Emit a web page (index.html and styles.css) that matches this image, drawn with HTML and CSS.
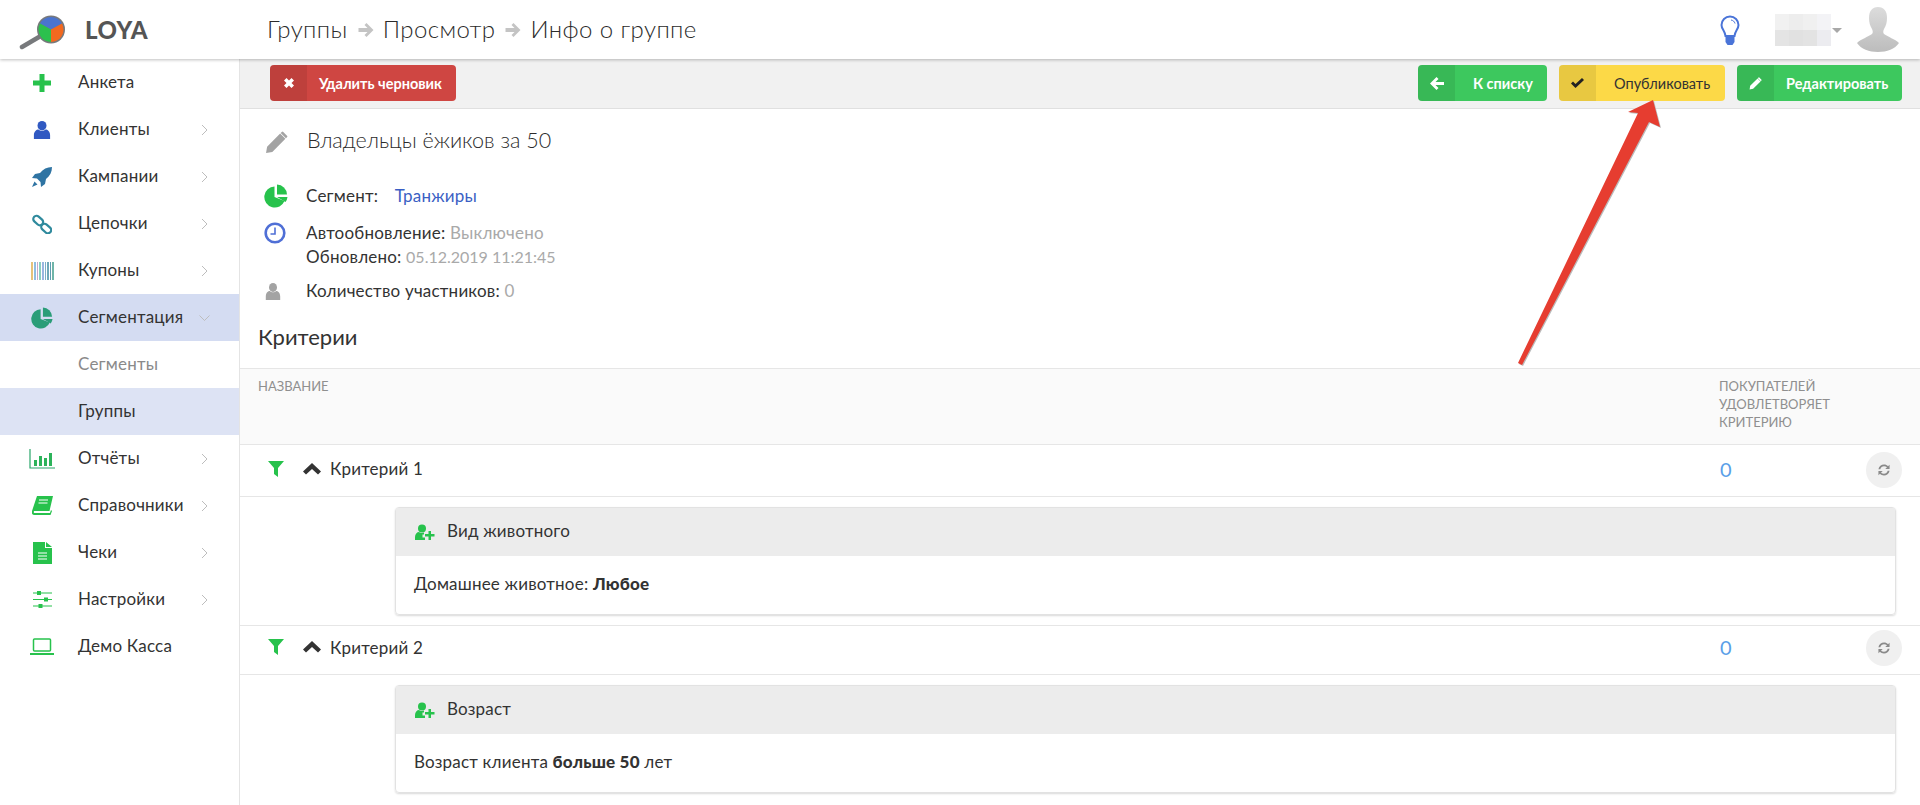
FILE: index.html
```html
<!DOCTYPE html>
<html lang="ru">
<head>
<meta charset="utf-8">
<title>Инфо о группе</title>
<link rel="stylesheet" href="styles.css">
</head>
<body>
<svg class="defs" width="0" height="0">
  <defs>
    <symbol id="i-user" viewBox="0 0 20 20" preserveAspectRatio="none"><circle cx="10" cy="6" r="5"/><path d="M1 20v-4c0-4 3-6 5-6 1 1 2.500 1.500 4 1.500s3-.5 4-1.500c2 0 5 2 5 6v4z"/></symbol>
    <symbol id="i-pie" viewBox="0 0 24 24"><path d="M10.500 2.500A10.500 10.500 0 1 0 20.500 17L10.500 13z"/><path d="M13 .5A10.500 10.500 0 0 1 23 10.500H13z"/><path d="M13 13h10.500a10.500 10.500 0 0 1-2 5z"/></symbol>
    <symbol id="i-pencil" viewBox="0 0 22 22"><path d="M1 21l1-6L14.500 2.500l5 5L7 20z M16 1l1-.5 4.500 4.500-.5 1-1 1-5-5z"/></symbol>
    <symbol id="i-filter" viewBox="0 0 16 16"><path d="M0 0h16L10 7v9L6 13V7z"/></symbol>
    <symbol id="i-up" viewBox="0 0 18 12"><path d="M9 0l9 8.500-3 3L9 6l-6 5.500-3-3z"/></symbol>
    <symbol id="i-refresh" viewBox="0 0 16 14"><path d="M1.500 6C2 2.500 5 .5 8 .5c2 0 3.500.8 4.700 2L14.500.8v5h-5l2-2C10.500 3 9.300 2.500 8 2.500 6 2.500 4.200 4 3.700 6z"/><path d="M14.500 8c-.5 3.500-3.500 5.500-6.500 5.500-2 0-3.500-.8-4.700-2L1.500 13.200v-5h5l-2 2c1 .8 2.200 1.300 3.500 1.300 2 0 3.800-1.500 4.300-3.500z"/></symbol>
    <symbol id="i-userplus" viewBox="0 0 20 16"><circle cx="7" cy="4.500" r="4"/><path d="M0 16v-3c0-3 2-5 4-5 1 .8 2 1 3 1s1.500-.2 2-.5v2H7.500v3H10V16z"/><path d="M13.500 7h2.500v3h3.500v2.500H16V16h-2.500v-3.500H10V10h3.500z"/></symbol>
    <symbol id="i-chev" viewBox="0 0 7 12"><path d="M1 1l5 5-5 5" fill="none" stroke="currentColor" stroke-width="1"/></symbol>
  </defs>
</svg>

<header class="topbar">
  <div class="brand">
    <svg class="logo" viewBox="0 0 48 36" width="48" height="36">
      <path d="M3 32l17-10" stroke="#77797c" stroke-width="4.500" stroke-linecap="round"/>
      <circle cx="32" cy="14.500" r="14" fill="#77797c"/>
      <path d="M32 14.500L21 8.500A12.500 12.500 0 0 1 43 8.500z" fill="#4a74cf"/>
      <path d="M32 14.500V27A12.500 12.500 0 0 1 21 8.500z" fill="#2cc04e"/>
      <path d="M32 14.500l11-6A12.500 12.500 0 0 1 32 27z" fill="#f2691f"/>
    </svg>
    <span class="brand-name">LOYA</span>
  </div>
  <nav class="crumbs">
    <span>Группы</span>
    <svg class="crumb-arrow" viewBox="0 0 16 14" width="16" height="14"><path d="M8.500 0L15.500 7l-7 7-2-2L9.500 9H.5V5h9L6.500 2z"/></svg>
    <span>Просмотр</span>
    <svg class="crumb-arrow" viewBox="0 0 16 14" width="16" height="14"><path d="M8.500 0L15.500 7l-7 7-2-2L9.500 9H.5V5h9L6.500 2z"/></svg>
    <span>Инфо о группе</span>
  </nav>
  <div class="top-right">
    <svg class="bulb" viewBox="0 0 20 30" width="20" height="30">
      <path d="M10 1.500a8.500 8.500 0 0 0-8.500 8.500c0 4 3.500 6 4 11h9c.5-5 4-7 4-11A8.500 8.500 0 0 0 10 1.500z" fill="#fff" stroke="#4a74d8" stroke-width="2"/>
      <path d="M5.500 21h9v6l-2 3h-5l-2-3z" fill="#4a74d8"/>
      <path d="M11 5c2 .3 3.500 1.500 4 3.500" fill="none" stroke="#4a74d8" stroke-width="1"/>
    </svg>
    <div class="blurred">
      <i class="b1"></i><i class="b2"></i><i class="b3"></i><i class="b4"></i>
      <i class="b5"></i><i class="b6"></i><i class="b7"></i><i class="b8"></i>
    </div>
    <span class="caret"></span>
    <svg class="avatar" viewBox="0 0 42 45" width="42" height="45">
      <defs><linearGradient id="ag" x1="0" y1="0" x2="0" y2="1"><stop offset="0" stop-color="#dcdcdc"/><stop offset="1" stop-color="#bcbcbc"/></linearGradient></defs>
      <path d="M21 0c6 0 9 4 9 11 0 4-1 8-3 11-1 2-1 4 0 5 4 3 11 5 15 9-4 6-12 9-21 9S4 42 0 36c4-4 11-6 15-9 1-1 1-3 0-5-2-3-3-7-3-11 0-7 3-11 9-11z" fill="url(#ag)"/>
    </svg>
  </div>
</header>

<div class="layout">
  <aside class="sidebar">
    <a class="nav-item"><span class="nav-ic"><svg viewBox="0 0 18 18" width="18" height="18"><path fill="#27c24c" d="M6.500 0h5v6.500H18v5h-6.500V18h-5v-6.500H0v-5h6.500z"/></svg></span><span class="nav-label">Анкета</span></a>
    <a class="nav-item"><span class="nav-ic"><svg width="18" height="19" fill="#3059c2"><use href="#i-user"/></svg></span><span class="nav-label">Клиенты</span><svg class="chev" width="7" height="12"><use href="#i-chev"/></svg></a>
    <a class="nav-item"><span class="nav-ic"><svg viewBox="0 0 20 20" width="20" height="20"><path fill="#2f74a3" d="M20 0c-5 0-9 2-12 6L3 7 0 11l5 .5 3.500 3.500.5 5 4-3 1-5c4-3 6-7 6-12zM2.500 14.500L0 20l5.500-2.500z"/></svg></span><span class="nav-label">Кампании</span><svg class="chev" width="7" height="12"><use href="#i-chev"/></svg></a>
    <a class="nav-item"><span class="nav-ic"><svg viewBox="0 0 20 20" width="20" height="20" fill="none" stroke="#2f8a9d" stroke-width="2.200"><rect x="-5" y="-3" width="11" height="6.500" rx="3.200" transform="translate(6 6) rotate(42)"/><rect x="-5" y="-3" width="11" height="6.500" rx="3.200" transform="translate(14 14) rotate(42)"/></svg></span><span class="nav-label">Цепочки</span><svg class="chev" width="7" height="12"><use href="#i-chev"/></svg></a>
    <a class="nav-item"><span class="nav-ic"><svg viewBox="0 0 23 18" width="23" height="18"><rect width="23" height="18" fill="#fff"/><rect x="0" width="2" height="18" fill="#e6c27a"/><rect x="3" width="2" height="18" fill="#8fbde0"/><rect x="6" width="1" height="18" fill="#c9a8c8"/><rect x="8" width="2" height="18" fill="#8ccfc0"/><rect x="11" width="2" height="18" fill="#9ab6e0"/><rect x="14" width="1" height="18" fill="#7fb0c8"/><rect x="16" width="2" height="18" fill="#6fa7b8"/><rect x="19" width="1" height="18" fill="#5f9db0"/><rect x="21" width="2" height="18" fill="#6fb5a8"/></svg></span><span class="nav-label">Купоны</span><svg class="chev" width="7" height="12"><use href="#i-chev"/></svg></a>
    <a class="nav-item is-open"><span class="nav-ic"><svg width="22" height="22" fill="#2a9d78"><use href="#i-pie"/></svg></span><span class="nav-label">Сегментация</span><svg class="chev chev-down" width="7" height="12"><use href="#i-chev"/></svg></a>
    <a class="nav-item nav-sub"><span class="nav-ic"></span><span class="nav-label">Сегменты</span></a>
    <a class="nav-item nav-sub is-active"><span class="nav-ic"></span><span class="nav-label">Группы</span></a>
    <a class="nav-item"><span class="nav-ic"><svg viewBox="0 0 26 20" width="26" height="20"><path fill="none" stroke="#2aa66a" stroke-width="1.200" d="M1 0v19h25"/><path fill="#2cb35a" d="M5 11h3v6H5zM10 7h3v10h-3zM15 9h3v8h-3zM20 4h3v13h-3z"/></svg></span><span class="nav-label">Отчёты</span><svg class="chev" width="7" height="12"><use href="#i-chev"/></svg></a>
    <a class="nav-item"><span class="nav-ic"><svg viewBox="0 0 21 19" width="21" height="19"><path fill="#27c24c" d="M5 0h16l-3.500 15H2.500c-1 0-1 2 0 2H18l1-3 1 1-1.500 4H2C0 19-.5 17 0 15z"/><path stroke="#fff" stroke-width="1" d="M7 4h9M6.500 7h9"/></svg></span><span class="nav-label">Справочники</span><svg class="chev" width="7" height="12"><use href="#i-chev"/></svg></a>
    <a class="nav-item"><span class="nav-ic"><svg viewBox="0 0 19 22" width="19" height="22"><path fill="#27c24c" d="M0 0h12v6h7v16H0z"/><path fill="#27c24c" d="M13 0l6 5h-6z"/><path stroke="#fff" stroke-width="1.200" d="M5 11h9M5 14h9M5 17h9"/></svg></span><span class="nav-label">Чеки</span><svg class="chev" width="7" height="12"><use href="#i-chev"/></svg></a>
    <a class="nav-item"><span class="nav-ic"><svg viewBox="0 0 19 17" width="19" height="17"><path stroke="#27c24c" stroke-width="1.200" d="M0 2h19M0 8.500h19M0 15h19"/><path fill="#27c24c" d="M4 0h4v4H4zM11 6.500h4v4h-4zM5.500 13h4v4h-4z"/></svg></span><span class="nav-label">Настройки</span><svg class="chev" width="7" height="12"><use href="#i-chev"/></svg></a>
    <a class="nav-item"><span class="nav-ic"><svg viewBox="0 0 24 17" width="24" height="17"><rect x="3.500" y="1" width="17" height="12" rx="1" fill="none" stroke="#27c24c" stroke-width="1.500"/><path fill="#27c24c" d="M0 15h24v2H0z"/></svg></span><span class="nav-label">Демо Касса</span></a>
  </aside>

  <main class="main">
    <div class="toolbar">
      <button class="btn btn-red"><span class="btn-ic"><svg viewBox="0 0 10 10" width="10" height="10"><path fill="#fff" d="M2.500 0L5 2.500 7.500 0 10 2.500 7.500 5 10 7.500 7.500 10 5 7.500 2.500 10 0 7.500 2.500 5 0 2.500z"/></svg></span><span class="btn-text">Удалить черновик</span></button>
      <div class="toolbar-right">
        <button class="btn btn-green btn-back"><span class="btn-ic"><svg viewBox="0 0 14 13" width="14" height="13"><path fill="#fff" d="M6.500 0l2 2-3 3H14v3H5.500l3 3-2 2L0 6.500z"/></svg></span><span class="btn-text">К списку</span></button>
        <button class="btn btn-yellow"><span class="btn-ic"><svg viewBox="0 0 13 10" width="13" height="10"><path fill="#222" d="M4.500 10L0 5.500 2 3.500l2.500 2.500L11 0l2 2z"/></svg></span><span class="btn-text">Опубликовать</span></button>
        <button class="btn btn-green"><span class="btn-ic"><svg width="13" height="13" fill="#fff"><use href="#i-pencil"/></svg></span><span class="btn-text">Редактировать</span></button>
      </div>
    </div>

    <section class="info">
      <div class="title-row">
        <svg class="info-ic" width="23" height="23" fill="#a3a3a3"><use href="#i-pencil"/></svg>
        <h1 class="title">Владельцы ёжиков за 50</h1>
      </div>
      <div class="info-row segment-row">
        <svg class="info-ic" width="24" height="24" fill="#27c24c"><use href="#i-pie"/></svg>
        <div>Сегмент: <a class="link">Транжиры</a></div>
      </div>
      <div class="info-row clock-row">
        <svg class="info-ic" viewBox="0 0 22 22" width="22" height="22"><circle cx="11" cy="11" r="9.300" fill="#fff" stroke="#4f6fd6" stroke-width="2.600"/><path d="M11 5.500V12H6.500" fill="none" stroke="#4f6fd6" stroke-width="1.600"/></svg>
        <div>
          <div>Автообновление: <span class="muted">Выключено</span></div>
          <div>Обновлено: <span class="muted date">05.12.2019 11:21:45</span></div>
        </div>
      </div>
      <div class="info-row count-row">
        <svg class="info-ic ic-small" width="16" height="18" fill="#a3a3a3"><use href="#i-user"/></svg>
        <div>Количество участников: <span class="muted">0</span></div>
      </div>
      <h2 class="section-title">Критерии</h2>
    </section>

    <div class="thead">
      <div>Название</div>
      <div class="thead-r">Покупателей удовлетворяет критерию</div>
    </div>

    <div class="crit-row crit-first">
      <svg class="ic-filter" width="16" height="16" fill="#27c24c"><use href="#i-filter"/></svg>
      <svg class="ic-up" width="18" height="12" fill="#333"><use href="#i-up"/></svg>
      <span class="crit-name">Критерий 1</span>
      <span class="crit-count">0</span>
      <span class="round-btn"><svg width="14" height="12" fill="#8a8a8a"><use href="#i-refresh"/></svg></span>
    </div>
    <div class="crit-body">
      <div class="card">
        <div class="card-head"><svg width="20" height="16" fill="#27c24c"><use href="#i-userplus"/></svg><span>Вид животного</span></div>
        <div class="card-body">Домашнее животное: <b>Любое</b></div>
      </div>
    </div>

    <div class="crit-row">
      <svg class="ic-filter" width="16" height="16" fill="#27c24c"><use href="#i-filter"/></svg>
      <svg class="ic-up" width="18" height="12" fill="#333"><use href="#i-up"/></svg>
      <span class="crit-name">Критерий 2</span>
      <span class="crit-count">0</span>
      <span class="round-btn"><svg width="14" height="12" fill="#8a8a8a"><use href="#i-refresh"/></svg></span>
    </div>
    <div class="crit-body">
      <div class="card">
        <div class="card-head"><svg width="20" height="16" fill="#27c24c"><use href="#i-userplus"/></svg><span>Возраст</span></div>
        <div class="card-body">Возраст клиента <b>больше 50</b> лет</div>
      </div>
    </div>
  </main>
</div>

<svg class="annot" viewBox="0 0 1920 805" width="1920" height="805">
  <path d="M1522 365l-4-2L1638 113l-10-1L1653 100l7 27-11-5z" fill="#bbb" transform="translate(1 1)"/>
  <path d="M1522 365l-4-2L1638 113l-10-1L1653 100l7 27-11-5z" fill="#e63d30"/>
</svg>
</body>
</html>
```
FILE: styles.css
```css
* { box-sizing: border-box; }
html, body { margin: 0; height: 805px; overflow: hidden; }
body {
  font-family: Lato, "Noto Sans", sans-serif;
  font-size: 17px;
  letter-spacing: .2px;
  color: #333;
  background: #fff;
  position: relative;
}
.defs { position: absolute; }

.topbar {
  height: 59px;
  display: flex;
  align-items: center;
  background: #fff;
  box-shadow: 0 1px 3px rgba(0,0,0,.25);
  position: relative;
  z-index: 2;
}
.brand { width: 240px; height: 100%; display: flex; align-items: center; padding-left: 19px; }
.logo { flex: none; margin-top: 7px; }
.brand-name { margin-left: 18px; font-size: 24px; font-weight: 900; color: #555; letter-spacing: .5px; }
.crumbs { display: flex; align-items: center; padding: 0 0 3px 27px; font-size: 24px; font-weight: 300; letter-spacing: .4px; color: #2b2b2b; }
.crumb-arrow { fill: #c4c4c4; margin: 3px 9px 0 10px; }
.top-right { margin-left: auto; display: flex; align-items: center; padding-right: 21px; }
.bulb { margin-right: 35px; }
.blurred { display: grid; grid-template-columns: repeat(4, 14px); grid-auto-rows: 16px; width: 54px; height: 32px; }
.blurred i { display: block; }
.b1 { background: #f1f1f1; } .b2 { background: #ededed; } .b3 { background: #f0f0f0; } .b4 { background: #f3f3f6; }
.b5 { background: #e4e4e4; } .b6 { background: #e1e1e1; } .b7 { background: #e3e3e3; } .b8 { background: #ececf0; }
.caret { width: 0; height: 0; border: 5px solid transparent; border-top: 5px solid #a8a8a8; border-bottom: 0; margin: 2px 0 0 3px; }
.avatar { margin-left: 15px; }

.layout { display: flex; height: 746px; }
.sidebar { width: 240px; flex: none; border-right: 1px solid #e4e4e4; }
.nav-item { display: flex; align-items: center; height: 47px; color: #333; }
.nav-ic { width: 78px; flex: none; padding-left: 6px; display: flex; justify-content: center; align-items: center; }
.nav-label { flex: 1; padding-bottom: 2px; }
.chev { color: #bdbdbd; margin-right: 31px; }
.chev-down { transform: rotate(90deg); }
.is-open { background: #d4dcf2; }
.is-active { background: #dde3f4; }
.nav-sub .nav-label { color: #8a8a8a; }
.nav-sub.is-active .nav-label { color: #333; }

.main { flex: 1; min-width: 0; }
.toolbar {
  height: 50px;
  background: #f1f1f1;
  border-bottom: 1px solid #e0e0e0;
  display: flex;
  align-items: flex-start;
  padding: 6px 18px 0 30px;
}
.toolbar-right { margin-left: auto; display: flex; gap: 12px; }
.btn {
  height: 36px;
  border: 0;
  border-radius: 4px;
  padding: 0;
  display: flex;
  align-items: center;
  overflow: hidden;
  font: 700 14.500px Lato, "Noto Sans", sans-serif;
  color: #fff;
}
.btn-ic { width: 37px; height: 100%; display: flex; align-items: center; justify-content: center; background: rgba(0,0,0,.08); }
.btn-text { padding: 0 12px; }
.btn-red { width: 186px; background: #cf4642; }
.btn-green { width: 165px; background: #3dc85e; }
.btn-back { width: 129px; }
.btn-back .btn-text { padding-left: 18px; }
.btn-yellow { width: 166px; background: #fcd947; color: #333; font-weight: 400; }
.btn-yellow .btn-text { padding-left: 18px; }

.info { padding: 0 0 0 18px; }
.title-row { display: flex; align-items: center; height: 64px; padding-top: 1px; }
.title { margin: 0 0 4px 19px; font-size: 21.500px; font-weight: 300; letter-spacing: 0; color: #2b2b2b; }
.title-row .info-ic { margin: 2px 0 0 7px; }
.info-ic { flex: none; }
.info-row { display: flex; line-height: 24px; }
.segment-row { margin-top: 11px; }
.segment-row .info-ic { margin-left: 6px; margin-right: 18px; }
.clock-row { margin-top: 13px; }
.clock-row .info-ic { margin-left: 6px; margin-right: 20px; margin-top: 1px; }
.count-row { margin-top: 10px; align-items: center; }
.count-row .info-ic { margin-left: 7px; margin-right: 25px; }
.link { color: #3a5fc4; margin-left: 12px; }
.muted { color: #a9a9a9; }
.date { font-size: 16px; letter-spacing: 0; }
.section-title { margin: 22px 0 0 0; font-size: 22px; font-weight: 400; letter-spacing: 0; line-height: 24px; height: 43px; }

.thead {
  height: 77px;
  background: #fafafa;
  border-top: 1px solid #e6e6e6;
  border-bottom: 1px solid #e6e6e6;
  display: flex;
  justify-content: space-between;
  padding: 8px 0 0 18px;
  font-size: 13px;
  letter-spacing: 0;
  line-height: 18px;
  color: #8f8f8f;
  text-transform: uppercase;
}
.thead-r { width: 201px; padding-right: 60px; }

.crit-row {
  height: 49px;
  display: flex;
  align-items: center;
  border-bottom: 1px solid #e6e6e6;
  padding: 0 18px 4px 28px;
}
.crit-first { height: 52px; padding-bottom: 2px; }
.ic-filter { flex: none; margin-bottom: 2px; }
.ic-up { flex: none; margin: 0 0 2px 19px; }
.crit-name { margin: 0 0 2px 9px; }
.crit-count { margin: 0 0 2px auto; width: 146px; font-size: 20px; letter-spacing: 0; color: #5a9fe8; }
.round-btn { width: 36px; height: 36px; border-radius: 50%; background: #f0f0f0; display: flex; align-items: center; justify-content: center; }

.crit-body { padding: 10px 24px 10px 155px; border-bottom: 1px solid #e6e6e6; }
.crit-body:last-child { border-bottom: 0; }
.card { border-radius: 4px; border: 1px solid #e2e2e2; box-shadow: 0 1px 2px rgba(0,0,0,.15); }
.card-head { height: 48px; background: #ececec; display: flex; align-items: center; gap: 12px; padding: 0 0 3px 19px; }
.card-head svg { margin-top: 3px; }
.card-body { height: 58px; padding: 0 0 3px 18px; display: flex; align-items: center; white-space: pre; }
.card-body b { font-weight: 900; }

.annot { position: absolute; left: 0; top: 0; pointer-events: none; z-index: 3; }
```
